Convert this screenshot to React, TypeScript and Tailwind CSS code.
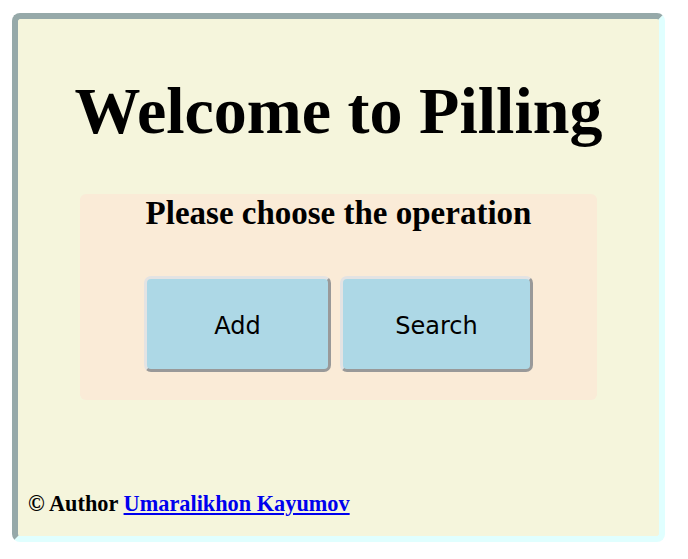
import React from "react";

export default function App() {
  return (
    <div className="w-[688px] h-[559px] bg-white pt-[13px] pl-[12px]">
      <div className="w-[653px] h-[529px] rounded-[8px] border-[6px] border-t-[#96a9a9] border-l-[#96a9a9] border-r-[#e0ffff] border-b-[#e0ffff] bg-[#f5f5dc] flex flex-col items-center">
        <h1
          className="mt-[59px] text-[66px] leading-[66px] font-bold text-black whitespace-nowrap"
          style={{ fontFamily: '"Liberation Serif", "Times New Roman", serif' }}
        >
          Welcome to Pilling
        </h1>
        <div className="mt-[50px] w-[517px] h-[206px] rounded-[6px] bg-[#faebd7] flex flex-col items-center pt-[3px]">
          <h2
            className="text-[33px] leading-[32px] font-bold text-black whitespace-nowrap"
            style={{ fontFamily: '"Liberation Serif", "Times New Roman", serif' }}
          >
            Please choose the operation
          </h2>
          <div className="mt-[47px] flex gap-[9px]">
            <button
              className="w-[187px] h-[96px] pt-[3px] rounded-[7px] border-[3px] border-t-[#e3e3e3] border-l-[#e3e3e3] border-r-[#999999] border-b-[#999999] bg-[#add8e6] text-[24px] text-black flex items-center justify-center"
              style={{ fontFamily: '"DejaVu Sans", Verdana, sans-serif' }}
            >
              Add
            </button>
            <button
              className="w-[193px] h-[96px] pt-[3px] rounded-[7px] border-[3px] border-t-[#e3e3e3] border-l-[#e3e3e3] border-r-[#999999] border-b-[#999999] bg-[#add8e6] text-[24px] text-black flex items-center justify-center"
              style={{ fontFamily: '"DejaVu Sans", Verdana, sans-serif' }}
            >
              Search
            </button>
          </div>
        </div>
        <div
          className="self-start mt-[93px] pl-[10px] text-[22.3px] leading-[22px] font-bold text-black whitespace-nowrap"
          style={{ fontFamily: '"Liberation Serif", "Times New Roman", serif' }}
        >
          © Author{" "}
          <a href="#" className="text-[#0000ee] underline">
            Umaralikhon Kayumov
          </a>
        </div>
      </div>
    </div>
  );
}
